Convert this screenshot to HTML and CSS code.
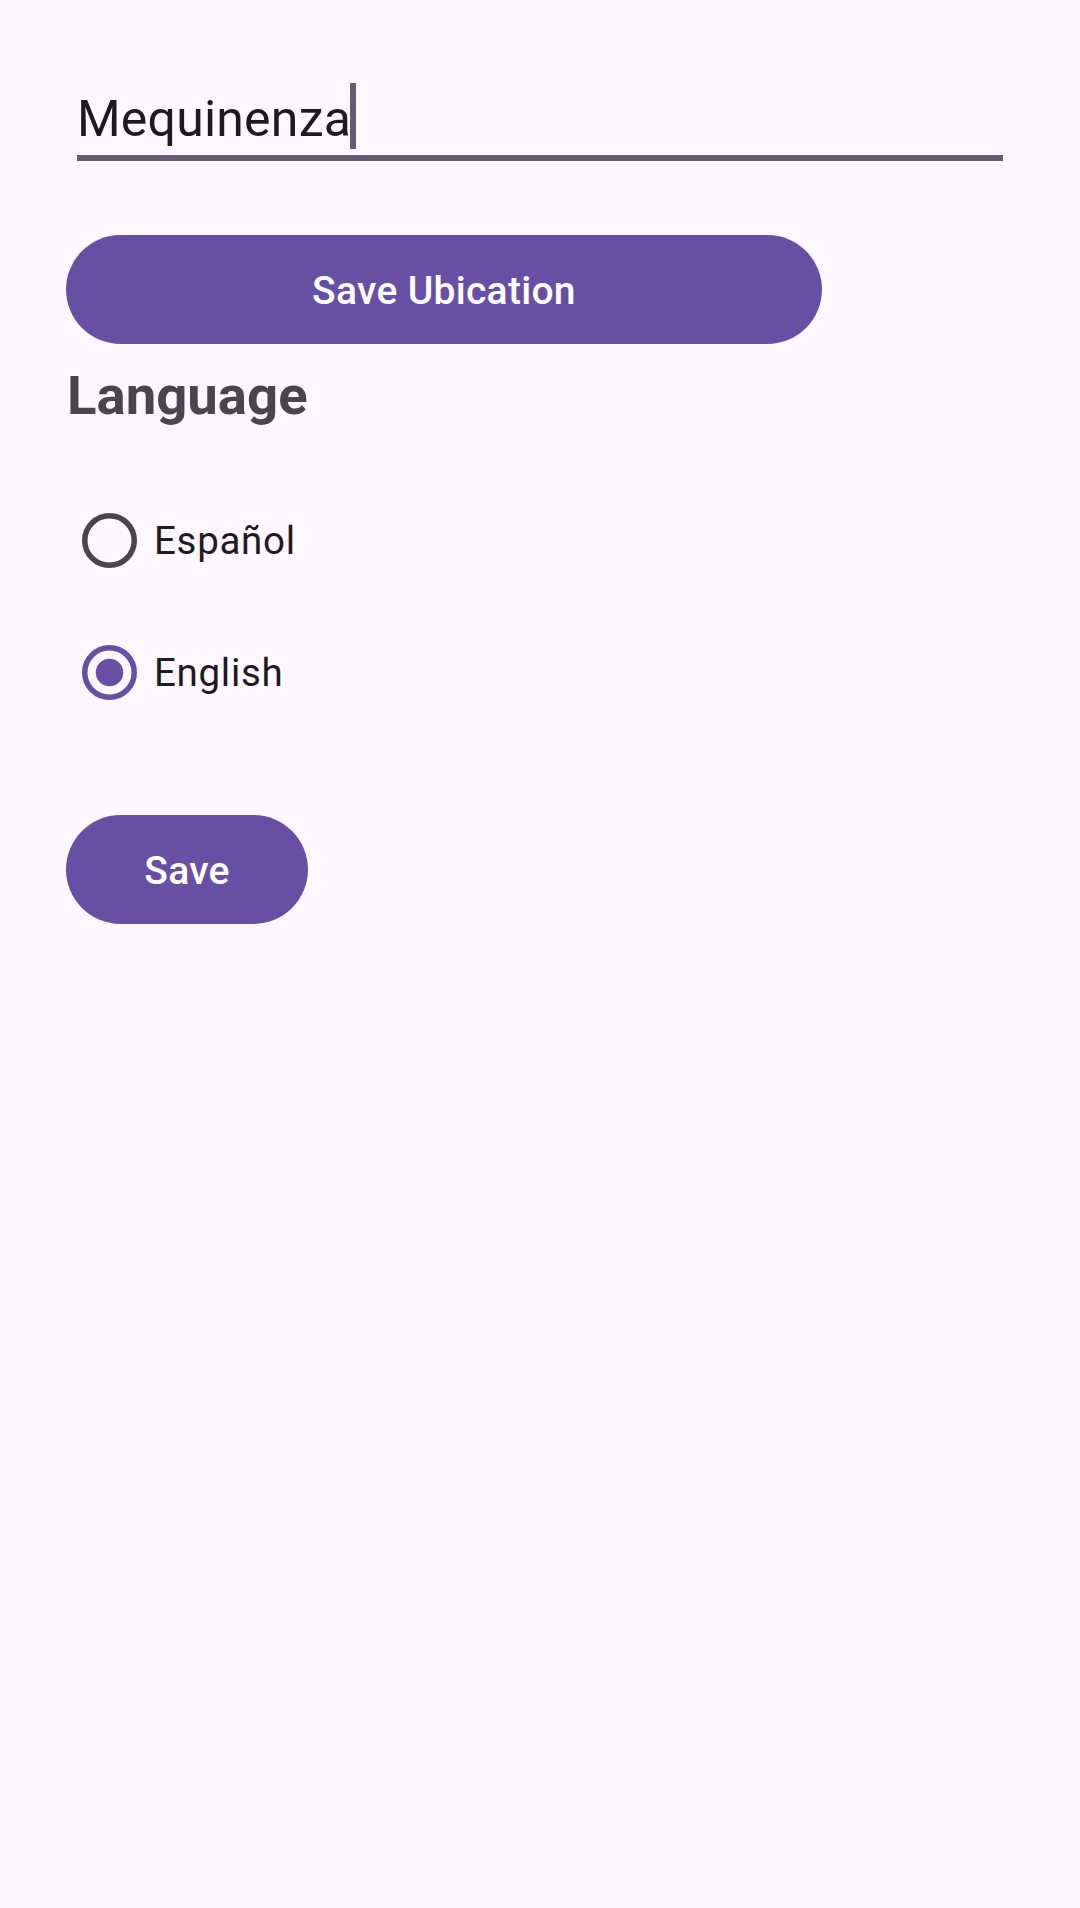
FILE: index.html
```html
<!DOCTYPE html>
<html lang="en">
<head>
<meta charset="utf-8">
<title>Settings</title>
<link rel="stylesheet" href="styles.css">
</head>
<body>
<main class="screen">
  <div class="field">
    <div class="field-line"><span class="field-text">Mequinenza</span><span class="cursor"></span></div>
  </div>
  <button class="btn btn-wide" type="button">Save Ubication</button>
  <h2 class="section-title">Language</h2>
  <div class="radio-group">
    <label class="radio-row">
      <svg class="radio" viewBox="0 0 20 20" width="55" height="55" aria-hidden="true"><circle cx="10" cy="10" r="9" fill="none" stroke="#49454F" stroke-width="2"/></svg>
      <span class="radio-label">Español</span>
    </label>
    <label class="radio-row">
      <svg class="radio" viewBox="0 0 20 20" width="55" height="55" aria-hidden="true"><circle cx="10" cy="10" r="9" fill="none" stroke="#6750A4" stroke-width="2"/><circle cx="10" cy="10" r="5" fill="#6750A4"/></svg>
      <span class="radio-label">English</span>
    </label>
  </div>
  <button class="btn btn-small" type="button">Save</button>
</main>
</body>
</html>
```
FILE: styles.css
```css
html, body {
  margin: 0;
  padding: 0;
  background: #FEF7FF;
}
body {
  width: 1080px;
  height: 1908px;
  font-family: Roboto, "Noto Sans", sans-serif;
  color: #1D1B20;
}
.screen {
  display: flex;
  flex-direction: column;
  align-items: flex-start;
  padding-top: 83px;
}
.field {
  margin-left: 77px;
  width: 926px;
  padding-bottom: 3px;
  border-bottom: 6px solid #645C72;
}
.field-line {
  font-size: 50px;
  line-height: 66px;
  letter-spacing: 0.2px;
  white-space: nowrap;
}
.cursor {
  display: inline-block;
  width: 6px;
  height: 66px;
  margin-left: -1px;
  background: #645C72;
  vertical-align: -13px;
}
.btn {
  margin-left: 66px;
  border: 0;
  background: #6750A4;
  color: #FFFFFF;
  font-family: Roboto, "Noto Sans", sans-serif;
  font-weight: 500;
  font-size: 39px;
  letter-spacing: 0.3px;
  height: 109px;
  border-radius: 55px;
  padding: 3px 0 0;
}
.btn-wide {
  margin-top: 74px;
  width: 756px;
}
.section-title {
  margin: 19px 0 0 67px;
  font-size: 54.5px;
  line-height: 64px;
  font-weight: 700;
  color: #49454F;
}
.radio-group {
  margin-top: 47px;
  display: flex;
  flex-direction: column;
}
.radio-row {
  display: flex;
  align-items: center;
  height: 132px;
  padding-left: 82px;
}
.radio {
  display: block;
  flex: none;
}
.radio-label {
  margin-left: 17px;
  font-size: 38.5px;
  letter-spacing: 0.7px;
  color: #1D1B20;
}
.btn-small {
  margin-top: 77px;
  width: 242px;
}
```
